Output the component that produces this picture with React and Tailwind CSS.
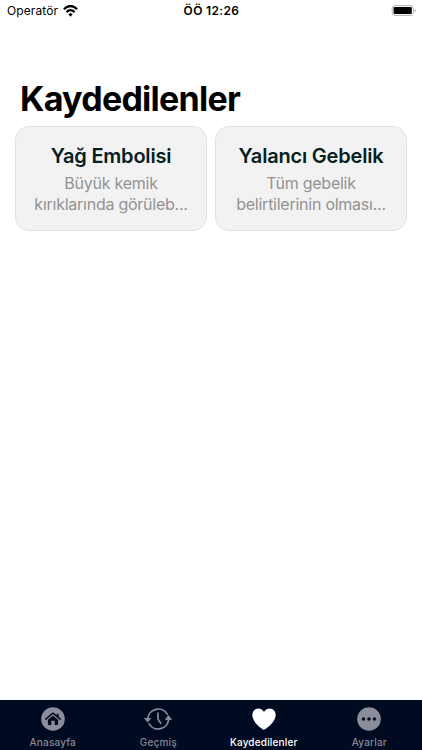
import React from "react";

const cards = [
  { title: "Yağ Embolisi", lines: ["Büyük kemik", "kırıklarında görüleb..."] },
  { title: "Yalancı Gebelik", lines: ["Tüm gebelik", "belirtilerinin olması..."] },
];

function Wifi() {
  return (
    <svg className="ml-[5px] h-[12px] w-[15px]" viewBox="0 0 16 12" preserveAspectRatio="none" fill="none" stroke="#000" strokeWidth="2.3">
      <path d="M1 4.2C5-.1 11-.1 15 4.2" />
      <path d="M3.7 7.1C6.2 4.5 9.8 4.5 12.3 7.1" />
      <path d="M8 11.7 5.7 9.2C7 8 9 8 10.3 9.2Z" fill="#000" stroke="none" />
    </svg>
  );
}

function Battery() {
  return (
    <svg className="h-[12px] w-[26px]" viewBox="0 0 26 12">
      <rect x="1.2" y=".6" width="21.2" height="9.8" rx="2.8" fill="none" stroke="#b0b0b0" strokeWidth="1" />
      <rect x="2.6" y="1.9" width="18.2" height="7.1" rx="1.2" fill="#000" />
      <path d="M23.8 4C25.2 4.5 25.2 6.6 23.8 7.1Z" fill="#a0a0a0" />
    </svg>
  );
}

function Home() {
  return (
    <svg className="h-6 w-[30px]" viewBox="0 0 30 24">
      <circle cx="15" cy="12" r="11.8" fill="#8b8d9a" />
      <path d="M7.8 12.2 15 6.2l7.2 6" fill="none" stroke="#000b21" strokeWidth="1.5" strokeLinecap="round" strokeLinejoin="round" />
      <path d="M18.8 6.7h1.8v4l-1.8-1.5ZM9.9 12.8 15 8.7l5.1 4.1v4.3q0 .9-.9.9h-2.5v-4.2h-3.4V18h-2.5q-.9 0-.9-.9Z" fill="#000b21" />
    </svg>
  );
}

function History() {
  return (
    <svg className="h-6 w-[30px]" viewBox="0 0 30 24" fill="none" stroke="#8b8d9a" strokeWidth="1.7" strokeLinecap="round" strokeLinejoin="round">
      <path d="M4.8 12A10.4 10.4 0 0 1 24.2 7.2M25.6 12A10.4 10.4 0 0 1 6.2 16.8" />
      <path d="M15 6.2V12.3l2.8 4" />
      <path d="M1.9 11.4h5.8l-2.9 3.5ZM22.7 12.6h5.8l-2.9-3.9Z" fill="#8b8d9a" strokeWidth=".9" />
    </svg>
  );
}

function Heart() {
  return (
    <svg className="h-6 w-[30px]" viewBox="0 0 30 24">
      <path d="M15 22.7C14.1 22.7 3.3 15.8 3.3 8.1 3.3 4.2 5.9 1.4 9.4 1.4c2.4 0 4.4 1.3 5.6 3.5 1.2-2.2 3.2-3.5 5.6-3.5 3.5 0 6.1 2.8 6.1 6.7C26.7 15.8 15.9 22.7 15 22.7Z" fill="#fff" />
    </svg>
  );
}

function More() {
  return (
    <svg className="h-6 w-[30px]" viewBox="0 0 30 24">
      <circle cx="15" cy="12" r="11.8" fill="#8b8d9a" />
      <g fill="#000b21">
        <circle cx="9.5" cy="12" r="1.8" />
        <circle cx="15" cy="12" r="1.8" />
        <circle cx="20.5" cy="12" r="1.8" />
      </g>
    </svg>
  );
}

const tabs = [
  { label: "Anasayfa", Icon: Home },
  { label: "Geçmiş", Icon: History },
  { label: "Kaydedilenler", Icon: Heart, active: true },
  { label: "Ayarlar", Icon: More },
];

export default function App() {
  return (
    <div className="flex h-[750px] w-[422px] flex-col overflow-hidden bg-white font-['Inter',sans-serif]">
      <header className="grid h-[22px] shrink-0 grid-cols-3 items-center pl-[7px] pr-[5px] text-[12px] leading-[22px] text-black">
        <div className="flex items-center whitespace-nowrap">
          <span className="tracking-[0.1px]">Operatör</span>
          <Wifi />
        </div>
        <div className="pr-[1px] text-center font-semibold tracking-[0.35px]">ÖÖ 12:26</div>
        <div className="flex justify-end"><Battery /></div>
      </header>
      <main className="flex-1 pt-[56px]">
        <h1 className="pl-[20px] text-[34px] font-bold leading-[42px] tracking-[-0.75px] text-black">Kaydedilenler</h1>
        <div className="mt-[6px] grid grid-cols-2 gap-2 px-[15px]">
          {cards.map((card) => (
            <article key={card.title} className="h-[105px] rounded-[14px] border border-[#e2e2e2] bg-[#f2f2f2] pt-[16px] text-center">
              <h2 className="text-[20px] font-semibold leading-[26px] tracking-[-0.2px] text-[#06201f]">{card.title}</h2>
              <div className="mt-[4px] text-[16px] leading-[21px] tracking-[-0.25px] text-[#929292]">
                {card.lines.map((line) => <p key={line} className="whitespace-nowrap">{line}</p>)}
              </div>
            </article>
          ))}
        </div>
      </main>
      <nav className="grid h-[50px] shrink-0 grid-cols-4 bg-[#000b21]">
        {tabs.map(({ label, Icon, active }) => (
          <div key={label} className={`flex flex-col items-center pt-[7px] text-[10px] font-medium leading-[12px] tracking-[0.18px] ${active ? "text-white" : "text-[#858895]"}`}>
            <Icon />
            <span className="mt-[5px]">{label}</span>
          </div>
        ))}
      </nav>
    </div>
  );
}
